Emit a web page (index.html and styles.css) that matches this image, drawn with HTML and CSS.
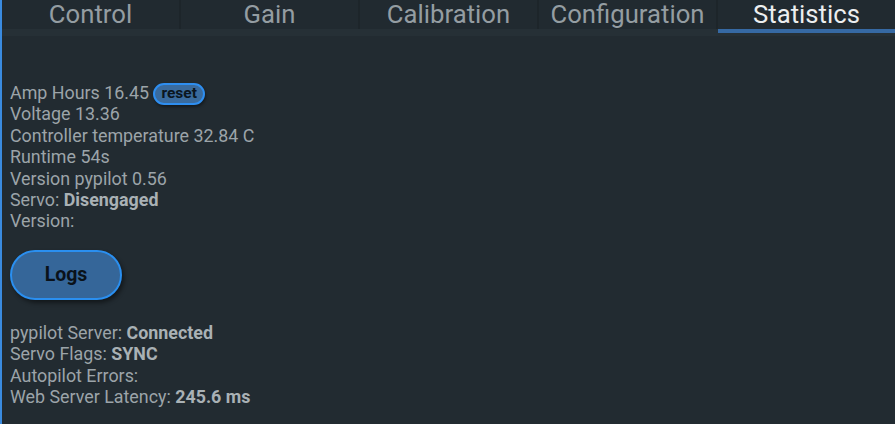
FILE: index.html
```html
<!DOCTYPE html>
<html>
<head>
<meta charset="utf-8">
<link rel="stylesheet" href="styles.css">
</head>
<body>
<div class="app">
  <nav class="tabs">
    <div class="tab">Control</div>
    <div class="tab">Gain</div>
    <div class="tab">Calibration</div>
    <div class="tab">Configuration</div>
    <div class="tab active">Statistics</div>
  </nav>
  <div class="strip"></div>
  <main class="content">
    <div class="stats">
      <div class="line">Amp Hours 16.45 <button class="reset">reset</button></div>
      <div class="line">Voltage 13.36</div>
      <div class="line">Controller temperature 32.84 C</div>
      <div class="line">Runtime 54s</div>
      <div class="line">Version pypilot 0.56</div>
      <div class="line">Servo: <b>Disengaged</b></div>
      <div class="line">Version:</div>
    </div>
    <button class="logs">Logs</button>
    <div class="stats">
      <div class="line">pypilot Server: <b>Connected</b></div>
      <div class="line">Servo Flags: <b>SYNC</b></div>
      <div class="line">Autopilot Errors:</div>
      <div class="line">Web Server Latency: <b>245.6 ms</b></div>
    </div>
  </main>
</div>
</body>
</html>
```

FILE: styles.css
```css
html, body {
  margin: 0;
  padding: 0;
  height: 100%;
  background: #222b31;
}
body {
  font-family: Roboto, "Liberation Sans", sans-serif;
  color: #9ca4a9;
}
.app {
  height: 100%;
  border-left: 2px solid #3a8be0;
  box-sizing: border-box;
  background: #222b31;
}
.tabs {
  display: flex;
  height: 29px;
  background: #212a30;
}
.tab {
  flex: 1;
  text-align: center;
  font-size: 25.7px;
  line-height: 29px;
  color: #949da2;
  border-right: 2px solid #1d252a;
  position: relative;
}
.tab:last-child { border-right: none; }
.tab.active {
  color: #eceeef;
}
.tab.active::after {
  content: "";
  position: absolute;
  left: 0;
  right: 0;
  top: 29px;
  height: 4px;
  background: #3669a3;
  z-index: 1;
}
.strip {
  height: 7px;
  background: #263036;
}
.content {
  padding: 46px 8px 0 8px;
}
.stats .line {
  font-size: 17.85px;
  line-height: 21.4px;
  height: 21.4px;
  white-space: nowrap;
}
.stats b {
  font-weight: 700;
  color: #a9b1b5;
}
.reset {
  font-family: Roboto, "Liberation Sans", sans-serif;
  font-weight: 700;
  font-size: 15.5px;
  color: #0b1620;
  background: #3a6b9e;
  border: 2px solid #2e8ef0;
  border-radius: 11px;
  height: 22px;
  padding: 0 6px;
  line-height: 17px;
  vertical-align: 1px;
  box-shadow: 1px 2px 3px rgba(0,0,0,0.4);
}
.logs {
  display: block;
  margin: 18px 0 22px 0;
  width: 112px;
  height: 50px;
  font-family: Roboto, "Liberation Sans", sans-serif;
  font-weight: 700;
  font-size: 19.5px;
  color: #0a121a;
  background: #356699;
  border: 2px solid #2a8ff0;
  border-radius: 25px;
  box-shadow: 2px 3px 4px rgba(0,0,0,0.45);
}
```
